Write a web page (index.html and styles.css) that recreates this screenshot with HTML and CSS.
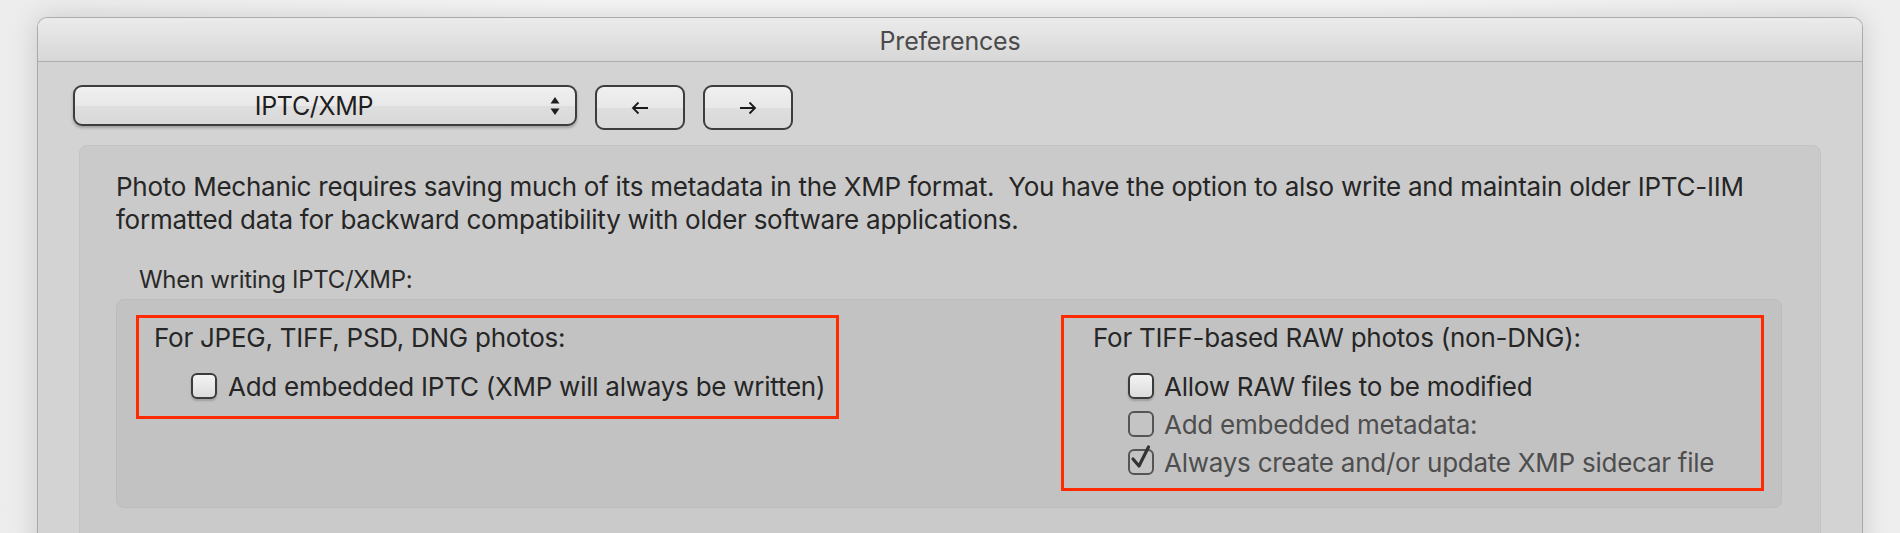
FILE: index.html
```html
<!DOCTYPE html>
<html>
<head>
<meta charset="utf-8">
<link rel="stylesheet" href="styles.css">
</head>
<body>
<div class="desk">
  <div class="window">
    <div class="titlebar">Preferences</div>
    <div class="body">
      <div class="toolbar">
        <div class="popup">
          <span class="popup-label">IPTC/XMP</span>
          <svg class="stepper" width="12" height="22" viewBox="0 0 12 22"><path d="M6 2 L10.5 8.5 H1.5 Z" fill="#1e1e1e"/><path d="M6 20 L10.5 13.5 H1.5 Z" fill="#1e1e1e"/></svg>
        </div>
        <div class="btn">
          <svg width="18" height="14" viewBox="0 0 18 14"><path d="M17 7 H2 M7.5 1.5 L2 7 L7.5 12.5" fill="none" stroke="#1a1a1a" stroke-width="1.8"/></svg>
        </div>
        <div class="btn">
          <svg width="18" height="14" viewBox="0 0 18 14"><path d="M1 7 H16 M10.5 1.5 L16 7 L10.5 12.5" fill="none" stroke="#1a1a1a" stroke-width="1.8"/></svg>
        </div>
      </div>
      <div class="panel">
        <p class="intro">Photo Mechanic requires saving much of its metadata in the XMP format.&nbsp; You have the option to also write and maintain older IPTC-IIM formatted data for backward compatibility with older software applications.</p>
        <div class="group-label">When writing IPTC/XMP:</div>
        <div class="group">
          <div class="hl hl-left">
            <div class="heading">For JPEG, TIFF, PSD, DNG photos:</div>
            <div class="rows rows-left">
              <div class="row"><span class="cb"></span><span>Add embedded IPTC (XMP will always be written)</span></div>
            </div>
          </div>
          <div class="hl hl-right">
            <div class="heading">For TIFF-based RAW photos (non-DNG):</div>
            <div class="rows rows-right">
              <div class="row"><span class="cb"></span><span>Allow RAW files to be modified</span></div>
              <div class="row disabled"><span class="cb cb-dis"></span><span>Add embedded metadata:</span></div>
              <div class="row disabled"><span class="cb cb-dis cb-on"><svg width="26" height="30" viewBox="0 0 26 30"><path d="M5 16 L11 23 L20.5 4" fill="none" stroke="#333" stroke-width="3.2" stroke-linecap="round" stroke-linejoin="round"/></svg></span><span>Always create and/or update XMP sidecar file</span></div>
            </div>
          </div>
        </div>
      </div>
    </div>
  </div>
</div>
</body>
</html>
```

FILE: styles.css
```css
html, body {
  margin: 0;
  padding: 0;
  height: 533px;
  overflow: hidden;
}
body {
  background: linear-gradient(90deg, #ececec 0%, #f6f6f6 30%, #f6f6f6 70%, #eeeeee 100%);
  font-family: Inter, "Noto Sans", sans-serif;
  color: #262626;
}
.desk {
  padding: 18px 38px 0 38px;
}
.window {
  width: 1824px;
  height: 560px;
  border-radius: 9px 9px 0 0;
  box-shadow: 0 0 28px rgba(0,0,0,0.16), 0 0 0 1px #b9b9b9;
  background: #d3d3d3;
  overflow: hidden;
}
.titlebar {
  height: 43px;
  border-bottom: 1px solid #acacac;
  background: linear-gradient(#ebebeb, #d7d7d7);
  text-align: center;
  font-size: 25px;
  line-height: 46px;
  color: #4b4b4b;
  letter-spacing: -0.2px;
}
.body {
  padding: 23px 41px 0 41px;
}
.toolbar {
  display: flex;
  gap: 18px;
  align-items: flex-start;
  margin-left: -6px;
}
.popup {
  width: 500px;
  height: 37px;
  border: 2px solid #3d3d3d;
  border-radius: 9px;
  background: linear-gradient(#f0f0f0 0%, #e8e8e8 50%, #dedede 51%, #d9d9d9 100%);
  box-shadow: 0 2px 3px rgba(0,0,0,0.25);
  display: flex;
  align-items: center;
}
.popup-label {
  flex: 1;
  text-align: center;
  font-size: 25px;
  color: #1e1e1e;
  letter-spacing: -0.3px;
  padding-left: 4px;
}
.stepper {
  margin-right: 14px;
}
.btn {
  width: 86px;
  height: 41px;
  border: 2px solid #3d3d3d;
  border-radius: 9px;
  background: linear-gradient(#f0f0f0 0%, #e8e8e8 50%, #dedede 51%, #d9d9d9 100%);
  display: flex;
  align-items: center;
  justify-content: center;
}
.panel {
  margin-top: 15px;
  background: #cacaca;
  border: 1px solid #c3c3c3;
  border-radius: 8px;
  height: 420px;
  padding: 24px 38px 0 36px;
}
.intro {
  margin: 0;
  font-size: 26px;
  line-height: 33px;
  color: #262626;
  letter-spacing: -0.25px;
}
.group-label {
  margin-top: 29px;
  padding-left: 23px;
  font-size: 24px;
  line-height: 29px;
  color: #2a2a2a;
  letter-spacing: -0.3px;
}
.group {
  margin-top: 5px;
  height: 192px;
  background: #c2c2c2;
  border: 1px solid #bcbcbc;
  border-radius: 8px;
  padding: 15px 17px 0 19px;
  display: flex;
  justify-content: space-between;
  align-items: flex-start;
}
.hl {
  box-sizing: border-box;
  width: 703px;
  border: 3px solid #ff2a00;
  font-size: 26px;
  letter-spacing: -0.25px;
}
.hl-left {
  padding: 3px 0 11px 15px;
}
.hl-right {
  padding: 3px 0 7px 29px;
}
.heading {
  line-height: 33px;
}
.rows {
  margin-top: 13px;
}
.rows-left {
  padding-left: 37px;
}
.rows-right {
  padding-left: 35px;
}
.row {
  display: flex;
  align-items: center;
  height: 38px;
  gap: 11px;
  line-height: 33px;
}
.rows-right .row {
  gap: 10px;
}
.row.disabled {
  color: #4e4e4e;
}
.cb {
  width: 22px;
  height: 22px;
  flex: none;
  border: 2px solid #3b3b3b;
  border-radius: 6px;
  background: linear-gradient(#f3f3f3, #dcdcdc);
  box-shadow: 0 2px 2px rgba(0,0,0,0.18);
  position: relative;
}
.cb-dis {
  border-color: #555555;
  background: #c4c4c4;
  box-shadow: none;
}
.cb-on svg {
  position: absolute;
  left: -2px;
  top: -8px;
}
```
